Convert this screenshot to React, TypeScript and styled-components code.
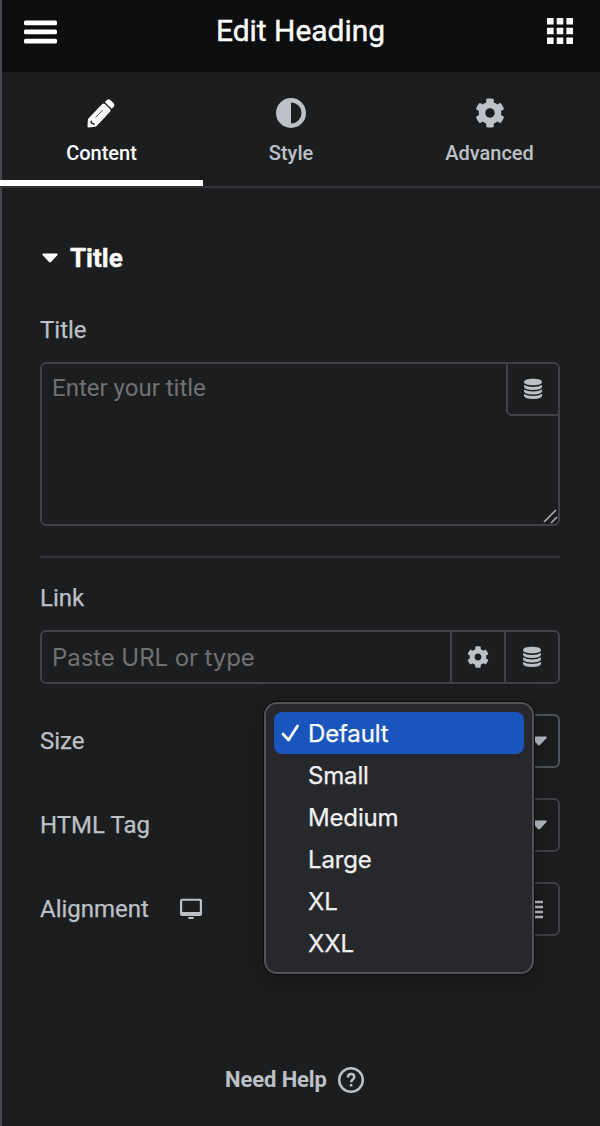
import React from 'react';
import styled, { createGlobalStyle } from 'styled-components';

const GlobalStyle = createGlobalStyle`
  * { box-sizing: border-box; }
  body { margin: 0; background: #1c1d1e; }
  svg { display: block; flex: none; }
  button, input, textarea { margin: 0; outline: none; }
`;

const line = '#3f4146';
const text = '#bcc0c7';

const Panel = styled.main`
  position: relative;
  width: 600px;
  height: 1126px;
  overflow: hidden;
  display: flex;
  flex-direction: column;
  background: #1c1d1e;
  color: ${text};
  font-family: Roboto, sans-serif;
`;

const Edge = styled.div`
  position: absolute;
  inset: 0 auto 0 0;
  width: 2px;
  background: #45474a;
`;

const Header = styled.header`
  height: 72px;
  flex: none;
  display: grid;
  grid-template-columns: 34px 1fr 34px;
  align-items: center;
  padding: 0 23px 10px 24px;
  background: #0c0d0e;
  color: #fff;
`;

const HeaderButton = styled.button<{ $end?: boolean }>`
  border: 0;
  padding: 0;
  background: none;
  color: inherit;
  display: flex;
  justify-content: ${p => (p.$end ? 'center' : 'flex-start')};
`;

const Heading = styled.h1`
  margin: 0;
  text-align: center;
  font-size: 30px;
  line-height: 36px;
  font-weight: 400;
  letter-spacing: -0.03px;
  -webkit-text-stroke: 0.4px currentColor;
`;

const Tabs = styled.nav`
  position: relative;
  height: 116px;
  flex: none;
  display: grid;
  grid-template-columns: 203px 176px 221px;
  border-bottom: 2px solid #303235;
`;

const Tab = styled.button<{ $active?: boolean }>`
  border: 0;
  border-bottom: 6px solid ${p => (p.$active ? '#fff' : 'transparent')};
  padding: 25px 0 0;
  background: none;
  color: ${p => (p.$active ? '#fff' : text)};
  font: 500 20px/24px Roboto, sans-serif;
  display: flex;
  flex-direction: column;
  align-items: center;
  gap: 12px;
`;

const TabIcon = styled.span`
  height: 32px;
  display: grid;
  place-items: center;
`;

const Section = styled.section`
  padding: 52px 40px 0;
`;

const SectionTitle = styled.h2`
  margin: 0;
  height: 36px;
  display: flex;
  align-items: center;
  gap: 12px;
  color: #fff;
  font-size: 26px;
  font-weight: 700;
  padding-left: 2px;
  -webkit-text-stroke: 0.4px currentColor;
`;

const Label = styled.label`
  display: flex;
  align-items: center;
  height: 32px;
  font-size: 24px;
  -webkit-text-stroke: 0.25px currentColor;
`;

const Field = styled.div<{ $top: number }>`
  margin-top: ${p => p.$top}px;
  display: flex;
  flex-direction: column;
  gap: 16px;
`;

const TextBox = styled.div`
  display: flex;
  align-items: flex-start;
  justify-content: space-between;
  position: relative;
  height: 164px;
  border: 2px solid ${line};
  border-radius: 6px;
`;

const TextArea = styled.textarea`
  flex: 1;
  min-width: 0;
  height: 160px;
  resize: none;
  border: 0;
  padding: 8px 10px;
  background: none;
  color: inherit;
  font: 400 24px/32px Roboto, sans-serif;
  &::placeholder { color: #707274; opacity: 1; }
`;

const CornerButton = styled.button`
  width: 52px;
  height: 52px;
  border: 0 solid ${line};
  border-width: 0 0 2px 2px;
  border-radius: 0 0 0 6px;
  padding: 0 1px 0 0;
  background: none;
  color: ${text};
  display: grid;
  place-items: center;
`;

const Grip = styled.svg`
  position: absolute;
  right: 0;
  bottom: 0;
`;

const Divider = styled.hr`
  margin: 30px 0 24px;
  border: 0;
  height: 2px;
  background: #303235;
`;

const InputGroup = styled.div`
  display: flex;
  height: 54px;
  border: 2px solid ${line};
  border-radius: 6px;
`;

const Input = styled.input`
  flex: 1;
  min-width: 0;
  border: 0;
  padding: 0 10px;
  background: none;
  color: inherit;
  font: 400 24px Inter, sans-serif;
  letter-spacing: -0.08px;
  &::placeholder { color: #707274; opacity: 1; }
`;

const AddonButton = styled.button`
  width: 54px;
  border: 0;
  border-left: 2px solid ${line};
  padding: 0 1px 1px 0;
  background: none;
  color: ${text};
  display: grid;
  place-items: center;
`;

const Row = styled.div`
  position: relative;
  margin-top: 30px;
  height: 54px;
  display: flex;
  align-items: center;
  justify-content: space-between;
`;

const RowLabel = styled(Label)`
  gap: 30px;
`;

const Select = styled.button<{ $focus?: boolean }>`
  width: 284px;
  height: 54px;
  border: 2px solid ${p => (p.$focus ? '#4f535b' : line)};
  border-radius: 6px;
  padding: 0 11px;
  background: none;
  color: ${text};
  display: flex;
  align-items: center;
  justify-content: flex-end;
`;

const Menu = styled.ul`
  position: absolute;
  z-index: 2;
  top: -12px;
  left: 224px;
  width: 270px;
  margin: 0;
  padding: 8px;
  list-style: none;
  border: 2px solid #505254;
  border-radius: 13px;
  background: #27282b;
  box-shadow: 0 0 0 1px #0b0b0c, 0 8px 28px rgba(0, 0, 0, 0.3);
  color: #f0f0f1;
  font-family: Inter, sans-serif;
  font-size: 24px;
  letter-spacing: -0.15px;
  -webkit-text-stroke: 0.25px currentColor;
`;

const Option = styled.li<{ $selected?: boolean }>`
  height: 42px;
  border-radius: 8px;
  background: ${p => (p.$selected ? '#1955bd' : 'transparent')};
  color: ${p => (p.$selected ? '#fff' : 'inherit')};
  display: grid;
  grid-template-columns: 34px 1fr;
  align-items: center;
`;

const OptionText = styled.span`
  grid-column: 2;
`;

const Check = styled.svg`
  grid-row: 1;
  margin-left: 7px;
`;

const Help = styled.a`
  margin: 126px 0 0 225px;
  display: flex;
  align-items: center;
  gap: 10px;
  height: 36px;
  font-size: 22px;
  font-weight: 700;
  letter-spacing: -0.1px;
`;

const HelpText = styled.span`
  padding-bottom: 2px;
`;

const MenuIcon = () => (
  <svg width="34" height="26" viewBox="0 0 34 26" fill="currentColor">
    <rect y="2.5" width="33" height="4.7" rx="1.5" />
    <rect y="11.6" width="33" height="4.7" rx="1.5" />
    <rect y="20.7" width="33" height="4.7" rx="1.5" />
  </svg>
);

const GridIcon = () => (
  <svg width="26" height="26" viewBox="0 0 26 26" fill="currentColor">
    {[0, 9.7, 19.4].map(y => [0, 9.7, 19.4].map(x => (
      <rect key={`${x}-${y}`} x={x} y={y} width="6.6" height="6.6" rx=".5" />
    )))}
  </svg>
);

const PencilIcon = () => (
  <svg width="30" height="32" viewBox="0 0 30 32">
    <path fill="#fff" d="M.5 29.3.9 22.8Q1 22 1.6 21.3L15.3 7q1.400-1.200 2.700 0l5 5q1.200 1.400 0 2.800L9.700 29q-.7.700-1.500.8l-6.500.7Q.4 30.6.5 29.3ZM17.8 5l2-2q1.800-1.600 3.600 0l3.300 3.300q1.500 1.800 0 3.500l-2 2Z" />
    <path fill="none" stroke="#1c1d1e" strokeWidth=".8" d="M8.500 20.500 15.800 13" />
    <path fill="none" stroke="#1c1d1e" strokeWidth="1.5" d="M4 23.800q.2 3.200 3.600 3.400" />
  </svg>
);

const ContrastIcon = () => (
  <svg width="32" height="32" viewBox="0 0 32 32" fill="currentColor">
    <path fillRule="evenodd" d="M16 1a15 15 0 1 0 0 30 15 15 0 0 0 0-30Zm0 4.5a10.5 10.5 0 0 1 0 21Z" />
  </svg>
);

const GearIcon = ({ size }: { size: number }) => (
  <svg width={size} height={size} viewBox="0 0 512 512" fill="currentColor">
    <path d="M487.4 315.7l-42.6-24.6c4.3-23.2 4.3-47 0-70.2l42.6-24.6c4.9-2.8 7.1-8.6 5.5-14-11.1-35.6-30-67.8-54.7-94.6-3.8-4.1-10-5.1-14.8-2.3L380.8 110c-17.9-15.4-38.5-27.3-60.8-35.1V25.8c0-5.6-3.9-10.5-9.4-11.7-36.7-8.2-74.3-7.8-109.2 0-5.5 1.2-9.4 6.1-9.4 11.7V75c-22.2 7.9-42.8 19.8-60.8 35.1L88.7 85.5c-4.9-2.8-11-1.9-14.8 2.3-24.7 26.7-43.6 58.9-54.7 94.6-1.7 5.4.6 11.2 5.5 14L67.3 221c-4.3 23.2-4.3 47 0 70.2l-42.6 24.6c-4.9 2.8-7.1 8.6-5.5 14 11.1 35.6 30 67.8 54.7 94.6 3.8 4.1 10 5.1 14.8 2.3l42.6-24.6c17.9 15.4 38.5 27.3 60.8 35.1v49.2c0 5.6 3.9 10.5 9.4 11.7 36.7 8.2 74.3 7.8 109.2 0 5.5-1.2 9.4-6.1 9.4-11.7v-49.2c22.2-7.9 42.8-19.8 60.8-35.1l42.6 24.6c4.9 2.8 11 1.9 14.8-2.3 24.7-26.7 43.6-58.9 54.7-94.6 1.5-5.500-.7-11.300-5.600-14.100zM256 336c-44.100 0-80-35.900-80-80s35.900-80 80-80 80 35.900 80 80-35.900 80-80 80z" />
  </svg>
);

const DatabaseIcon = () => (
  <svg width="18" height="22" viewBox="0 0 18 22" fill="currentColor">
    <path d="M0 4C0 1.900 4 .7 9 .7S18 1.900 18 4 14 7.200 9 7.200 0 6.100 0 4Z" />
    {[6.9, 11.5, 16.1].map(y => (
      <path key={y} transform={`translate(0 ${y})`} d="M0 0Q3.500 2 9 2T18 0V2Q17 5 9 5T0 2Z" />
    ))}
  </svg>
);

const Caret = () => (
  <svg width="16" height="10" viewBox="0 0 16 10" fill="currentColor" stroke="none">
    <path d="M1.200.5h13.600q1.500.2.700 1.400L9 9.100q-1 .9-2 0L.5 1.900Q-.2.7 1.200.5Z" />
  </svg>
);

const options = ['Default', 'Small', 'Medium', 'Large', 'XL', 'XXL'];

export default function App() {
  return (
    <>
      <GlobalStyle />
      <Panel>
        <Header>
          <HeaderButton aria-label="Menu"><MenuIcon /></HeaderButton>
          <Heading>Edit Heading</Heading>
          <HeaderButton $end aria-label="Widgets"><GridIcon /></HeaderButton>
        </Header>
        <Edge />
        <Tabs>
          <Tab $active><TabIcon><PencilIcon /></TabIcon>Content</Tab>
          <Tab><TabIcon><ContrastIcon /></TabIcon>Style</Tab>
          <Tab><TabIcon><GearIcon size={30} /></TabIcon>Advanced</Tab>
        </Tabs>
        <Section>
          <SectionTitle><Caret />Title</SectionTitle>
          <Field $top={38}>
            <Label>Title</Label>
            <TextBox>
              <TextArea placeholder="Enter your title" />
              <CornerButton aria-label="Dynamic tags"><DatabaseIcon /></CornerButton>
              <Grip width="15" height="15" viewBox="0 0 15 15" stroke="#b4b5b6" strokeWidth="1.5">
                <path d="M1 13 13 1M8 14l6-6" />
              </Grip>
            </TextBox>
          </Field>
          <Divider />
          <Field $top={0}>
            <Label>Link</Label>
            <InputGroup>
              <Input placeholder="Paste URL or type" />
              <AddonButton aria-label="Link options"><GearIcon size={22} /></AddonButton>
              <AddonButton aria-label="Dynamic tags"><DatabaseIcon /></AddonButton>
            </InputGroup>
          </Field>
          <Row>
            <RowLabel>Size</RowLabel>
            <Select $focus aria-label="Size"><Caret /></Select>
            <Menu>
              {options.map((name, i) => (
                <Option key={name} $selected={i === 0}>
                  {i === 0 && (
                    <Check width="20" height="20" viewBox="0 0 20 20" fill="none" stroke="#fff" strokeWidth="2.8" strokeLinecap="round" strokeLinejoin="round">
                      <path d="M2 11 7.500 17 16.500 3" />
                    </Check>
                  )}
                  <OptionText>{name}</OptionText>
                </Option>
              ))}
            </Menu>
          </Row>
          <Row>
            <RowLabel>HTML Tag</RowLabel>
            <Select aria-label="HTML Tag"><Caret /></Select>
          </Row>
          <Row>
            <RowLabel>
              Alignment
              <svg width="24" height="22" viewBox="0 0 24 22" stroke="none">
                <path fill="currentColor" fillRule="evenodd" d="M3 .8h18q2 0 2 2v13.200q0 2-2 2H3q-2 0-2-2V2.800q0-2 2-2Zm.2 2V14h17.600V2.800ZM9 19h6q0 2-1.500 2h-3Q9 21 9 19Z" />
              </svg>
            </RowLabel>
            <Select aria-label="Alignment">
              <svg width="22" height="20" viewBox="0 0 22 20" fill="none" stroke="currentColor" strokeWidth="2.4">
                <path d="M0 3h18M0 8h18M0 13h18M0 18h18" />
              </svg>
            </Select>
          </Row>
        </Section>
        <Help>
          <HelpText>Need Help</HelpText>
          <svg width="28" height="28" viewBox="0 0 28 28" fill="none" stroke="currentColor" strokeWidth="2.5">
            <circle cx="14" cy="14" r="11.8" />
            <path d="M10.900 11.500q0-3.500 3.200-3.500t3.200 3.100c0 2.400-3.200 2.500-3.200 5.200M14.100 18v2.400" />
          </svg>
        </Help>
      </Panel>
    </>
  );
}
